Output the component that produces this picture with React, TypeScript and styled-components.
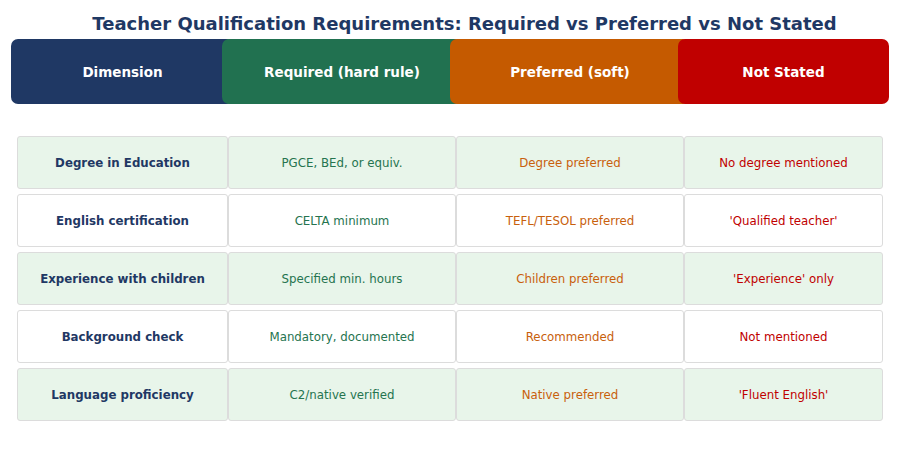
import React from "react";
import styled, { createGlobalStyle } from "styled-components";

const GlobalStyle = createGlobalStyle`
  html, body {
    margin: 0;
    padding: 0;
    background: #ffffff;
  }
  body {
    font-family: "DejaVu Sans", "Liberation Sans", sans-serif;
  }
`;

const COLS = [211, 228, 228, 199];

const HEADERS = [
  { label: "Dimension", bg: "#1f3864" },
  { label: "Required (hard rule)", bg: "#217150" },
  { label: "Preferred (soft)", bg: "#c55a00" },
  { label: "Not Stated", bg: "#c00000" },
];

const TEXT_COLORS = ["#1f3864", "#25744f", "#c8600c", "#c00000"];

const ROWS = [
  ["Degree in Education", "PGCE, BEd, or equiv.", "Degree preferred", "No degree mentioned"],
  ["English certification", "CELTA minimum", "TEFL/TESOL preferred", "'Qualified teacher'"],
  ["Experience with children", "Specified min. hours", "Children preferred", "'Experience' only"],
  ["Background check", "Mandatory, documented", "Recommended", "Not mentioned"],
  ["Language proficiency", "C2/native verified", "Native preferred", "'Fluent English'"],
];

const Page = styled.div`
  width: 900px;
  height: 466px;
  overflow: hidden;
  padding-top: 13px;
  box-sizing: border-box;
`;

const Title = styled.h1`
  margin: 0 0 4px 0;
  padding-left: 29px;
  text-align: center;
  font-size: 18px;
  line-height: 22px;
  font-weight: 700;
  color: #1f3864;
`;

const HeaderBar = styled.div`
  display: flex;
  margin-left: 11px;
  height: 65px;
`;

const HeaderCell = styled.div<{ $bg: string; $w: number; $first: boolean }>`
  flex: 0 0 ${(p) => p.$w + 12}px;
  margin-left: ${(p) => (p.$first ? 0 : -12)}px;
  background: ${(p) => p.$bg};
  border-radius: 7px;
  display: flex;
  align-items: center;
  justify-content: center;
  color: #ffffff;
  font-weight: 700;
  font-size: 13.5px;
`;

const Table = styled.div`
  display: flex;
  flex-direction: column;
  gap: 5px;
  margin: 32px 0 0 17px;
`;

const Row = styled.div`
  display: flex;
  height: 53px;
`;

const Cell = styled.div<{ $w: number; $alt: boolean; $color: string; $bold: boolean }>`
  flex: 0 0 ${(p) => p.$w}px;
  box-sizing: border-box;
  border: 1px solid #dcdcdc;
  border-radius: 3px;
  background: ${(p) => (p.$alt ? "#e8f5ea" : "#ffffff")};
  display: flex;
  align-items: center;
  justify-content: center;
  color: ${(p) => p.$color};
  font-weight: ${(p) => (p.$bold ? 700 : 400)};
  font-size: 11.8px;
`;

export default function App() {
  return (
    <Page>
      <GlobalStyle />
      <Title>Teacher Qualification Requirements: Required vs Preferred vs Not Stated</Title>
      <HeaderBar>
        {HEADERS.map((h, i) => (
          <HeaderCell key={h.label} $bg={h.bg} $w={COLS[i]} $first={i === 0}>
            {h.label}
          </HeaderCell>
        ))}
      </HeaderBar>
      <Table>
        {ROWS.map((row, r) => (
          <Row key={row[0]}>
            {row.map((text, c) => (
              <Cell
                key={c}
                $w={COLS[c]}
                $alt={r % 2 === 0}
                $color={TEXT_COLORS[c]}
                $bold={c === 0}
              >
                {text}
              </Cell>
            ))}
          </Row>
        ))}
      </Table>
    </Page>
  );
}
